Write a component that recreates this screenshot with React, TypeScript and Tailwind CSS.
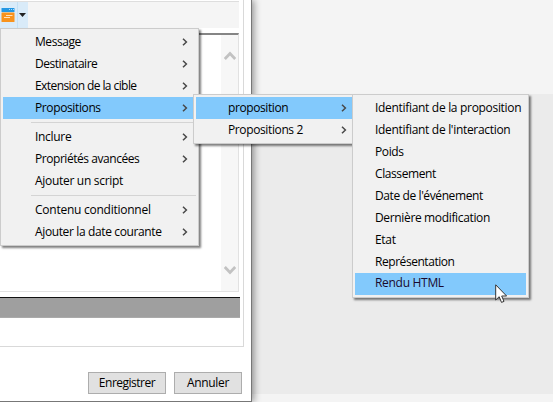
type Item = { label: string; arrow?: boolean; active?: boolean; text?: string };

const mainMenu: (Item | null)[] = [
  { label: "Message", arrow: true, text: "tracking-[-0.45px]" },
  { label: "Destinataire", arrow: true, text: "tracking-[-0.48px]" },
  { label: "Extension de la cible", arrow: true, text: "tracking-[-0.58px]" },
  { label: "Propositions", arrow: true, active: true, text: "tracking-[-0.38px]" },
  null,
  { label: "Inclure", arrow: true, text: "tracking-[-0.3px]" },
  { label: "Propriétés avancées", arrow: true, text: "tracking-[-0.45px]" },
  { label: "Ajouter un script", text: "tracking-[-0.3px]" },
  null,
  { label: "Contenu conditionnel", arrow: true, text: "tracking-[-0.25px]" },
  { label: "Ajouter la date courante", arrow: true, text: "tracking-[-0.37px]" },
];

const propositionsMenu: Item[] = [
  { label: "proposition", arrow: true, active: true, text: "tracking-[-0.4px]" },
  { label: "Propositions 2", arrow: true, text: "tracking-[-0.38px]" },
];

const fieldsMenu: Item[] = [
  { label: "Identifiant de la proposition", text: "tracking-[-0.31px]" },
  { label: "Identifiant de l'interaction", text: "tracking-[-0.31px]" },
  { label: "Poids", text: "tracking-[-0.4px]" },
  { label: "Classement", text: "tracking-[-0.4px]" },
  { label: "Date de l'événement", text: "tracking-[-0.4px]" },
  { label: "Dernière modification", text: "tracking-[-0.35px]" },
  { label: "Etat", text: "tracking-[-0.3px]" },
  { label: "Représentation", text: "tracking-[-0.45px]" },
  { label: "Rendu HTML", active: true, text: "tracking-[-0.3px] -mt-[2px] text-[#1a0a2e]" },
];

function Menu({ items, className, indent }: { items: (Item | null)[]; className: string; indent: string }) {
  return (
    <div className={`absolute border border-[#cccccc] bg-[#f1f1f1] p-[2px] ${className}`}>
      {items.map((item, i) =>
        item ? (
          <div
            key={i}
            className={`flex h-[22px] items-center justify-between pr-[8px] text-[12px] leading-[22px] whitespace-nowrap text-black ${indent} ${item.active ? "bg-[#82c9fc]" : ""}`}
          >
            <span className={item.text}>{item.label}</span>
            {item.arrow && (
              <svg width="6" height="8" viewBox="0 0 6 8" fill="none" stroke="#484848" strokeWidth="1.5">
                <path d="M1 0.7 4.4 4 1 7.3" />
              </svg>
            )}
          </div>
        ) : (
          <div key={i} className="flex h-[7px] items-center pl-[28px]">
            <div className="h-px w-full bg-[#d4d4d4]" />
          </div>
        ),
      )}
    </div>
  );
}

function Chevron({ up }: { up?: boolean }) {
  return (
    <svg width="12" height="10" viewBox="0 0 12 10" fill="none" stroke="#c2c2c2" strokeWidth="2.8">
      <path d={up ? "M0.8 8 6 2.6 11.2 8" : "M0.8 2 6 7.4 11.2 2"} />
    </svg>
  );
}

export default function App() {
  return (
    <div className="relative flex h-[402px] w-[553px] overflow-hidden bg-[#f4f4f4] font-['Open_Sans','Noto_Sans',sans-serif]">
      <div className="z-0 flex h-[402px] w-[252px] shrink-0 flex-col border-r border-b border-[#777] bg-white shadow-[2px_0_7px_rgba(0,0,0,0.4)]">
        <div className="flex h-[347px] w-[244px] flex-col border-r border-b border-[#d9d9d9]">
          <div className="mt-px flex h-[27px] w-[239px] shrink-0 border-t border-[#dedede] bg-[#f5f5f5]">
            <div className="flex w-[28px] bg-[#d9ebf9]">
              <div className="flex w-[18px] justify-end border-r border-[#c3e0f5] pt-[6px] pr-[2px]">
                <svg width="14" height="14" viewBox="0 0 14 14">
                  <rect x="0.5" width="13" height="4" rx="0.6" fill="#2497e3" />
                  <path d="M8 1.5h1M10 1.5h1M12 1.5h1" stroke="#a8dcff" />
                  <rect x="0.5" y="4.5" width="13" height="9.5" rx="0.6" fill="#f8931d" />
                  <path d="M5 7.5h6.5M3 9.5h6" stroke="#ffe3bd" />
                </svg>
              </div>
              <div className="flex items-center pl-px">
                <svg width="7" height="4" viewBox="0 0 7 4">
                  <path d="M0 0h7L3.5 4z" fill="#222" />
                </svg>
              </div>
            </div>
          </div>
          <div className="mt-[5px] flex h-[259px] w-[239px] shrink-0 justify-end border-t-2 border-r border-b border-t-[#858585] border-r-[#e2e2e2] border-b-[#e2e2e2]">
            <div className="flex w-[17px] flex-col items-center justify-between bg-[#f7f7f7] pt-[16px] pb-[16px]">
              <Chevron up />
              <Chevron />
            </div>
          </div>
          <div className="mt-[5px] h-[21px] w-[240px] shrink-0 border-t border-b border-t-[#111] border-b-[#aaa] bg-[#9f9f9f]" />
        </div>
        <div className="mt-[25px] flex justify-end gap-[8px] pr-[9px] text-[12px] text-black">
          <button className="h-[22px] w-[78px] border border-[#adadad] bg-[#e1e1e1] leading-[20px] tracking-[-0.5px]">Enregistrer</button>
          <button className="h-[22px] w-[68px] border border-[#adadad] bg-[#e1e1e1] leading-[20px] tracking-[-0.35px]">Annuler</button>
        </div>
      </div>
      <div className="mt-[94px] h-[300px] flex-1 bg-[#ebebeb]" />

      <Menu items={mainMenu} className="top-[28px] left-0 w-[199px] shadow-[2px_2px_2px_rgba(0,0,0,0.5)]" indent="pl-[32px]" />
      <Menu items={propositionsMenu} className="top-[94px] left-[193px] w-[165px] shadow-[2px_2px_2px_rgba(0,0,0,0.5)]" indent="pl-[32px]" />
      <Menu items={fieldsMenu} className="top-[94px] left-[352px] w-[177px] shadow-[2px_2px_2px_rgba(0,0,0,0.5)]" indent="pl-[20px]" />
      <svg className="absolute top-[284px] left-[495px]" width="13" height="20" viewBox="0 0 13 20">
        <path d="M0.7 0.8V16L4.2 12.7 6.5 18.4 9 17.4 6.7 12H11.6Z" fill="#fff" stroke="#333" strokeWidth="1" />
      </svg>
    </div>
  );
}
